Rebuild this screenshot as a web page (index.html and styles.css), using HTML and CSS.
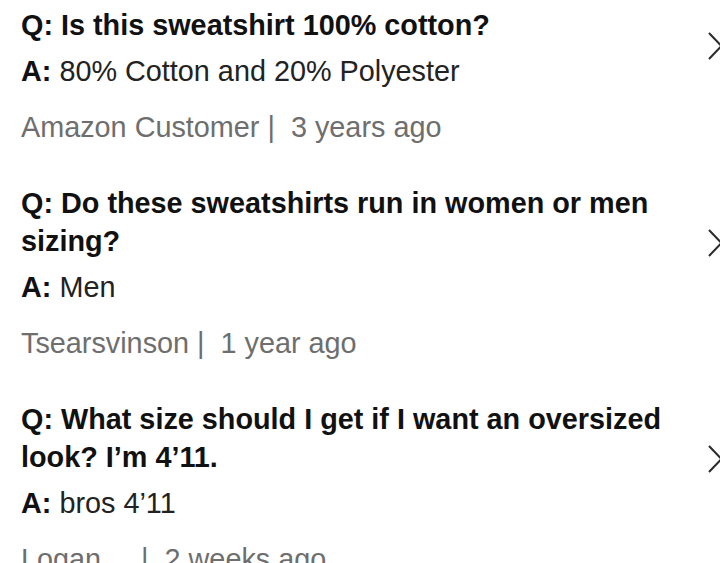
FILE: index.html
```html
<!DOCTYPE html>
<html lang="en">
<head>
<meta charset="utf-8">
<title>Customer questions</title>
<link rel="stylesheet" href="styles.css">
</head>
<body>
<main class="qa-list">
  <section class="item">
    <div class="row">
      <div class="qa">
        <p class="q">Q: Is this sweatshirt 100% cotton?</p>
        <p class="a"><b>A:</b> 80% Cotton and 20% Polyester</p>
      </div>
      <svg class="chev" width="12" height="28" viewBox="0 0 12 28"><path d="M1 1 L13.5 14 L1 27" fill="none" stroke="#2b2b2b" stroke-width="2"/></svg>
    </div>
    <p class="meta">Amazon Customer |&nbsp; 3 years ago</p>
  </section>
  <section class="item">
    <div class="row">
      <div class="qa">
        <p class="q">Q: Do these sweatshirts run in women or men sizing?</p>
        <p class="a"><b>A:</b> Men</p>
      </div>
      <svg class="chev" width="12" height="28" viewBox="0 0 12 28"><path d="M1 1 L13.5 14 L1 27" fill="none" stroke="#2b2b2b" stroke-width="2"/></svg>
    </div>
    <p class="meta">Tsearsvinson |&nbsp; 1 year ago</p>
  </section>
  <section class="item">
    <div class="row">
      <div class="qa">
        <p class="q">Q: What size should I get if I want an oversized look? I’m 4’11.</p>
        <p class="a"><b>A:</b> bros 4’11</p>
      </div>
      <svg class="chev" width="12" height="28" viewBox="0 0 12 28"><path d="M1 1 L13.5 14 L1 27" fill="none" stroke="#2b2b2b" stroke-width="2"/></svg>
    </div>
    <p class="meta">Logan&nbsp;&nbsp;&nbsp;&nbsp; |&nbsp; 2 weeks ago</p>
  </section>
</main>
</body>
</html>
```
FILE: styles.css
```css
html, body {
  margin: 0;
  padding: 0;
  background: #ffffff;
  overflow: hidden;
}
body {
  font-family: "Liberation Sans", Arial, Helvetica, sans-serif;
  font-size: 28.8px;
  line-height: 38.5px;
  color: #1a1a1a;
}
.qa-list {
  padding: 6px 0 0 21px;
  width: 699px;
  display: flex;
  flex-direction: column;
  gap: 37px;
}
p {
  margin: 0;
}
.row {
  display: flex;
  align-items: center;
}
.qa {
  flex: 1;
  padding-right: 10px;
}
.q {
  font-weight: bold;
  color: #111111;
}
.a {
  margin-top: 7.5px;
  color: #222222;
}
.a b {
  color: #111111;
}
.meta {
  margin-top: 17.5px;
  color: #6e6e6e;
}
.chev {
  flex: none;
  margin-bottom: 4px;
}
```
